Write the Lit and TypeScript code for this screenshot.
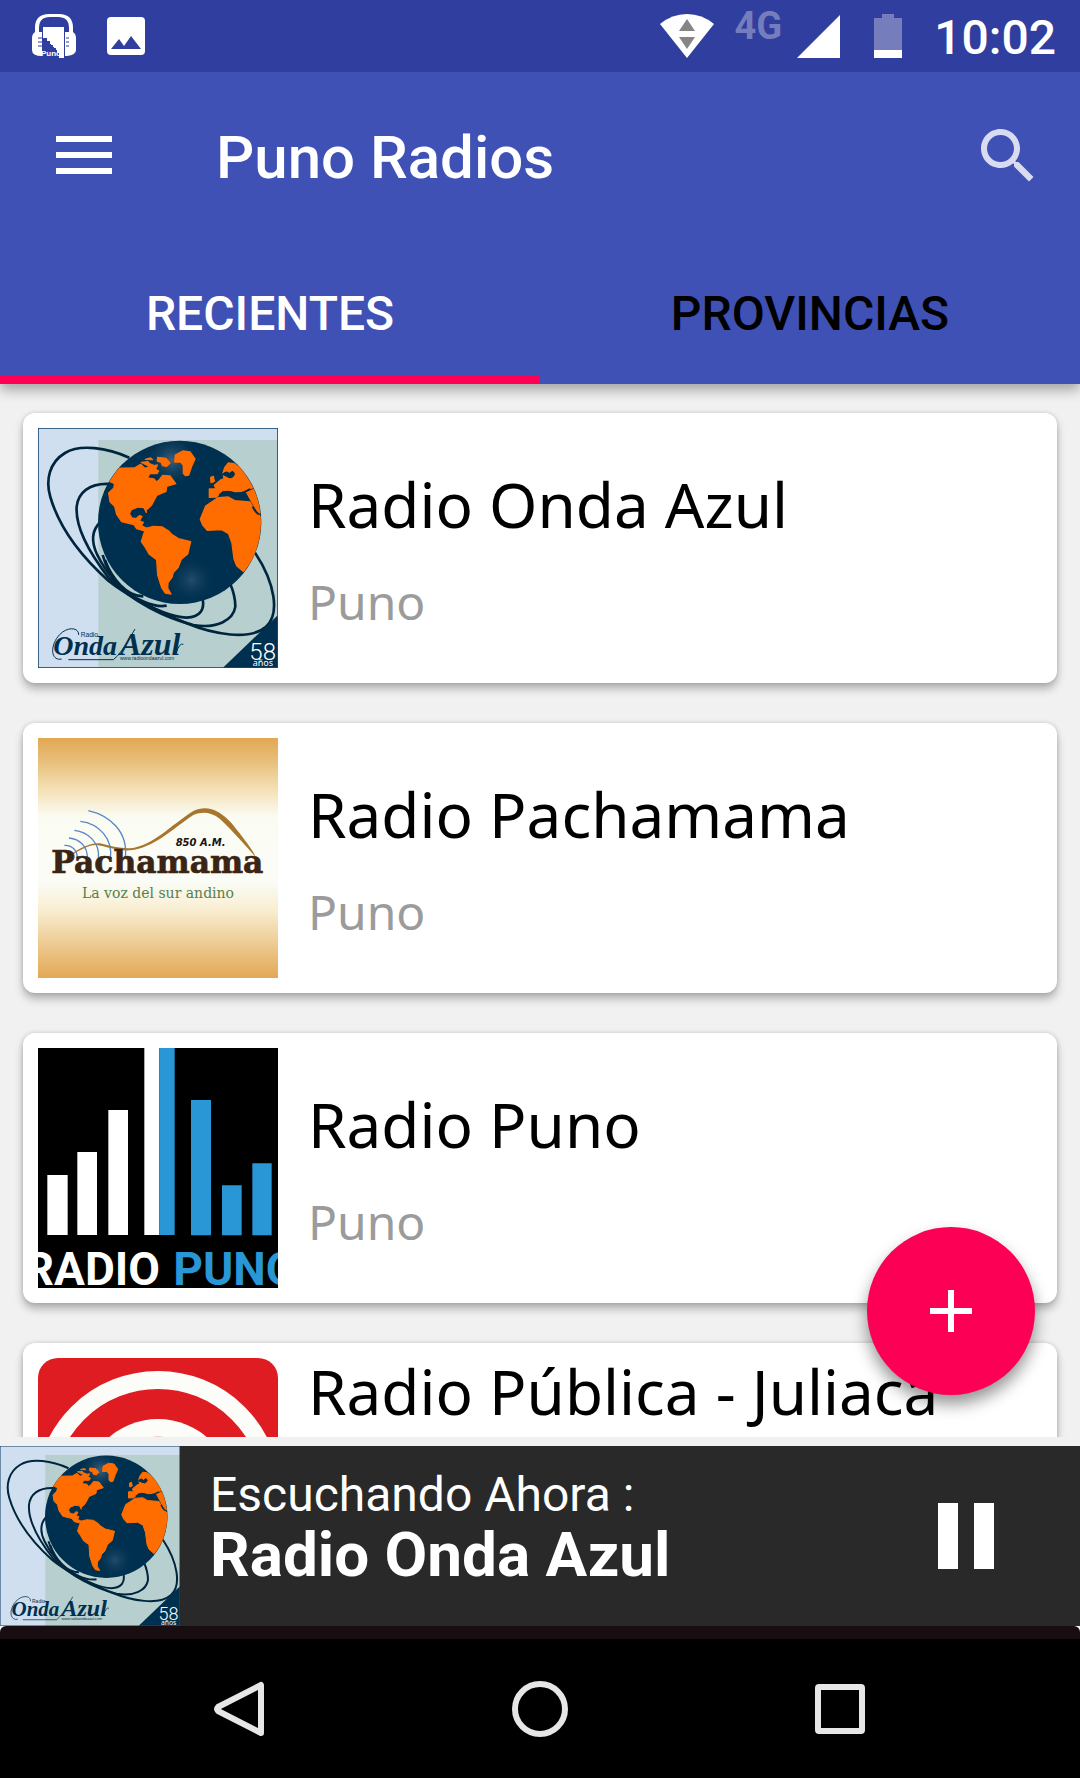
import { LitElement, html, css, svg } from "lit";
import { customElement, property, state } from "lit/decorators.js";

type LogoName = "onda-azul" | "pachamama" | "puno" | "publica";

interface Station {
  name: string;
  city: string;
  logo: LogoName;
  long?: boolean;
}

const STATIONS: Station[] = [
  { name: "Radio Onda Azul", city: "Puno", logo: "onda-azul" },
  { name: "Radio Pachamama", city: "Puno", logo: "pachamama" },
  { name: "Radio Puno", city: "Puno", logo: "puno" },
  { name: "Radio Pública - Juliaca", city: "Puno", logo: "publica", long: true },
];

const TABS = ["RECIENTES", "PROVINCIAS"];

const ondaAzul = () => svg`
  <defs>
    <clipPath id="globe"><circle cx="479" cy="352" r="244"/></clipPath>
    <radialGradient id="shine"><stop offset="0" stop-color="#3d6080"/><stop offset="1" stop-color="#00304f" stop-opacity="0"/></radialGradient>
  </defs>
  <rect x="54" y="69" width="720" height="720" fill="#cfdff0"/>
  <rect x="235" y="105" width="539" height="684" fill="#b8cfd0"/>
  <g fill="none" stroke="#00263e" stroke-width="8">
    <path d="M328 158C262 128 180 116 135 144C88 172 76 225 91 276C120 375 190 460 265 527C335 583 430 625 500 655C580 688 690 708 738 665C780 628 766 535 705 443"/>
    <path d="M272 237C205 233 174 265 170 305C166 365 205 440 265 517C335 590 440 640 520 660C590 672 640 646 646 605C646 580 640 558 630 535"/>
    <path d="M242 350C212 378 214 412 232 450C258 502 290 545 345 580C400 612 450 635 500 638C542 636 554 612 548 582"/>
    <path d="M248 450C262 500 280 525 300 545C340 580 400 610 440 602"/>
    <path d="M255 465C275 520 320 575 370 574"/>
  </g>
  <circle cx="479" cy="352" r="245" fill="#00304f"/>
  <g clip-path="url(#globe)">
    <circle cx="455" cy="165" r="85" fill="url(#shine)"/>
    <circle cx="515" cy="525" r="75" fill="url(#shine)" opacity=".6"/>
  </g>
  <g clip-path="url(#globe)" fill="#ff6d00" stroke="#ff6d00" stroke-width="4" stroke-linejoin="round">
    <path d="M270 190L343 189L362 178L374 190L392 184L416 198L411 206L390 206L381 219L402 222L409 231L418 224L428 211L450 213L467 236L440 244L438 259L410 271L395 300L378 316L379 322L372 308L354 306L334 314L328 326L336 339L348 341L358 332L366 334L358 348L370 352L364 362L380 370L371 377L350 371L342 359L305 350L290 328L284 304L270 290L266 264L281 250L284 236L262 226Z"/>
    <path d="M378 370L400 364L427 366L446 378L455 388L475 401L512 410L503 447L484 463L474 488L460 503L456 517L444 533L443 550L453 567L436 564L425 548L413 510L410 464L388 448L376 427L364 410L370 390Z"/>
    <path d="M466 150L488 138L510 141L525 162L515 184L506 210L496 212L490 205L490 181L482 171L464 171Z"/>
    <path d="M376 163L392 159L398 164Z M413 157L438 160L450 174L440 184L427 182L424 172L412 168Z M364 172L384 170L388 176L403 182L412 180L408 190L392 186Z"/>
    <path d="M568 252L589 252L583 241L602 225L612 222L609 204L614 188L625 174L642 176L668 194L690 222L703 248L690 250L672 259L645 260L625 255L606 257L590 276L568 277Z"/>
    <path d="M572 217L580 214L583 229L573 233Z"/>
    <path d="M595 278L625 276L644 287L690 291L705 318L730 345L730 410L716 405L700 460L671 500L650 482L642 462L636 415L626 386L605 374L562 376L548 360L541 343L557 303L577 290Z"/>
    <path d="M680 262L704 252L728 320L716 325L694 288Z"/>
    <path d="M608 208Q620 195 628 207Q640 192 643 208Q636 223 622 214Z" fill="#00304f" stroke="#00304f"/>
    <path d="M598 270Q620 252 648 268Q675 262 690 252M698 305Q705 320 716 328" fill="none" stroke="#00304f" stroke-width="6"/>
  </g>
  <path d="M608 789L774 630V789Z" fill="#00304f"/>
  <g fill="#00304f">
    <text class="script" x="100" y="750" font-size="84">Onda</text>
    <text class="script" x="300" y="750" font-size="96">Azul</text>
    <text class="sans" x="182" y="695" font-size="20">Radio</text>
    <text class="sans" x="300" y="764" font-size="15">www.radioondaazul.com</text>
  </g>
  <path d="M176 690C178 665 135 662 110 700C88 735 98 768 125 762M145 764H280Q300 752 345 672M468 746Q478 712 490 718" fill="none" stroke="#00304f" stroke-width="3"/>
  <text class="light" x="688" y="765" font-size="72" fill="#fff">58</text>
  <text class="noto" x="698" y="784" font-size="27" fill="#fff">años</text>
  <path d="M55 69V789M773 69V789M54 70H774M54 788H774" stroke="#1d4a70" stroke-width="3"/>`;

const pachamama = () => svg`
  <defs>
    <linearGradient id="dusk" x1="0" y1="0" x2="0" y2="1">
      <stop offset="0" stop-color="#e2a854"/><stop offset=".1" stop-color="#e8bf7c"/>
      <stop offset=".22" stop-color="#f5e2b8"/><stop offset=".33" stop-color="#fafcf4"/>
      <stop offset=".6" stop-color="#fafcf6"/><stop offset=".72" stop-color="#f9edd0"/>
      <stop offset=".88" stop-color="#ebc588"/><stop offset="1" stop-color="#e2a854"/>
    </linearGradient>
  </defs>
  <rect x="54" y="69" width="720" height="720" fill="url(#dusk)"/>
  <path d="M155 416C185 396 215 382 240 385C270 393 300 401 330 400C400 392 450 332 520 288C560 268 600 285 635 325C675 375 698 405 708 428C680 395 640 350 600 312C572 290 545 290 520 300C460 340 400 400 330 406C290 408 250 392 230 390C210 388 185 402 155 420Z" fill="#a8752c"/>
  <g fill="none" stroke="#5a86c4" stroke-width="4">
    <path d="M205 287C270 302 325 350 316 428"/>
    <path d="M181 319C235 325 280 370 271 432"/>
    <path d="M163 346C205 350 240 385 235 428"/>
    <path d="M147 369C180 372 203 395 202 430"/>
    <path d="M133 391C155 390 172 405 172 430"/>
  </g>
  <text class="slab-bold" x="94" y="475" font-size="94" fill="#3a2413" stroke="#3a2413" stroke-width="2">Pachamama</text>
  <text class="slab" x="186" y="549" font-size="42" fill="#55804f">La voz del sur andino</text>
  <text class="oblique" x="467" y="393" font-size="30" fill="#18120e">850 A.M.</text>`;

const puno = () => svg`
  <rect x="54" y="69" width="720" height="720" fill="#000"/>
  <path d="M82 450H143V630H82ZM172 381H231V630H172ZM265 255H324V630H265ZM373 69H418V630H373Z" fill="#fff"/>
  <path d="M418 69H464V630H418ZM513 225H573V631H513ZM606 481H665V631H606ZM697 415H755V631H697Z" fill="#2996d6"/>
  <text class="heavy" x="420" y="781" font-size="138" text-anchor="end" fill="#fff">RADIO</text>
  <text class="heavy" x="460" y="781" font-size="138" fill="#2996d6">PUNO</text>`;

const publica = () => svg`
  <defs><clipPath id="tile"><rect x="54" y="69" width="720" height="720" rx="60"/></clipPath></defs>
  <g clip-path="url(#tile)">
    <rect x="54" y="69" width="720" height="720" fill="#e01c23"/>
    <circle cx="414" cy="476" r="341" fill="none" stroke="#fcfcf8" stroke-width="54"/>
    <circle cx="414" cy="476" r="224" fill="#fcfcf8"/>
    <circle cx="414" cy="476" r="171" fill="#e01c23"/>
  </g>`;

const LOGOS = { "onda-azul": ondaAzul, pachamama, puno, publica };

@customElement("station-logo")
export class StationLogo extends LitElement {
  static styles = css`
    :host { display: block; aspect-ratio: 1; flex: none; }
    svg { display: block; width: 100%; height: 100%; }
    .script { font-family: "Liberation Serif", serif; font-style: italic; font-weight: 700; }
    .sans { font-family: "Liberation Sans", sans-serif; }
    .light { font-family: Roboto, sans-serif; font-weight: 300; }
    .noto { font-family: "Noto Sans", sans-serif; }
    .slab { font-family: "DejaVu Serif", serif; }
    .slab-bold { font-family: "DejaVu Serif", serif; font-weight: 700; }
    .oblique { font-family: "DejaVu Sans", sans-serif; font-weight: 700; font-style: italic; }
    .heavy { font-family: Roboto, sans-serif; font-weight: 700; }
  `;

  @property() name: LogoName = "onda-azul";

  render() {
    return html`<svg viewBox="54 69 720 720" aria-hidden="true">${LOGOS[this.name]()}</svg>`;
  }
}

@customElement("status-bar")
export class StatusBar extends LitElement {
  static styles = css`
    :host {
      display: flex;
      align-items: center;
      justify-content: space-between;
      height: 72px;
      padding: 0 24px 0 32px;
      background: #303f9f;
      color: #fff;
      font: 500 48px/72px Roboto, sans-serif;
    }
    .group { display: flex; align-items: center; height: 72px; }
    .left { gap: 31px; }
    .network {
      align-self: flex-start;
      margin: 0 15px 0 21px;
      padding-top: 4px;
      font-size: 38px;
      font-weight: 700;
      line-height: 44px;
      color: #757dbc;
    }
    .battery { margin: 0 32px 0 34px; }
    time { padding-top: 4px; }
    .tiny { font: 700 8px "Liberation Sans", sans-serif; }
    svg { display: block; }
  `;

  render() {
    return html`
      <div class="group left">
        <svg width="44" height="44" viewBox="0 0 44 44" fill="#fff" aria-hidden="true">
          <path d="M3 18V14Q3 0 17 0H27Q41 0 41 14V18Q44 20 44 24V36Q44 41 35 42H33V18H37V14Q37 3 26 3H18Q7 3 7 14V18H10V42Q0 42 0 36V24Q0 20 3 18Z"/>
          <path d="M11 13H32V44H27V39H24V34H21V31H18V27H15V24H11Z"/>
          <path d="M6 24H10M6 28H10M6 32H10M34 24H37M34 28H37M34 32H37" stroke="#303f9f" stroke-width="1"/>
          <path d="M10 24H13V27H16V30H19V33H22V36H25V42H10Z" fill="#303f9f"/>
          <text class="tiny" x="9" y="42">Puno</text>
        </svg>
        <svg width="38" height="38" viewBox="0 0 38 38" aria-hidden="true">
          <rect width="38" height="38" rx="4" fill="#fff"/>
          <path d="M4 32L12 22L17 29L24 19L34 32Z" fill="#303f9f"/>
        </svg>
      </div>
      <div class="group">
        <svg width="54" height="44" viewBox="0 0 54 44" aria-hidden="true">
          <path d="M0 10Q12 0 27 0T54 10L27 44Z" fill="#fff"/>
          <path d="M27 5L35 17H19ZM27 35L35 23H19Z" fill="#858585"/>
        </svg>
        <span class="network">4G</span>
        <svg width="43" height="44" viewBox="0 0 43 44" aria-hidden="true"><path d="M43 1V44H0Z" fill="#fff"/></svg>
        <svg class="battery" width="28" height="44" viewBox="0 0 28 44" aria-hidden="true">
          <path d="M0 4H8V0H20V4H28V36H0Z" fill="#757dbc"/>
          <path d="M0 36H28V44H0Z" fill="#fff"/>
        </svg>
        <time>10:02</time>
      </div>
    `;
  }
}

@customElement("station-card")
export class StationCard extends LitElement {
  static styles = css`
    :host { display: block; }
    .card {
      display: flex;
      align-items: center;
      gap: 30px;
      height: 240px;
      padding: 15px;
      border-radius: 12px;
      background: #fff;
      box-shadow: 0 6px 9px rgba(0, 0, 0, 0.26), 0 0 5px rgba(0, 0, 0, 0.14);
      color: #000;
      font-family: "Noto Sans", sans-serif;
      text-decoration: none;
    }
    station-logo { width: 240px; }
    .text { display: flex; flex-direction: column; gap: 22px; }
    .name { margin: 0; font-size: 62px; font-weight: 400; line-height: 86px; white-space: nowrap; }
    .long .name { min-height: 172px; }
    .city { margin: 0; font-size: 48px; line-height: 66px; color: #9b9b9b; }
  `;

  @property({ attribute: false }) station!: Station;

  render() {
    const s = this.station;
    return html`
      <a class="card" href="#${s.logo}">
        <station-logo name=${s.logo}></station-logo>
        <div class=${s.long ? "text long" : "text"}>
          <h2 class="name">${s.name}</h2>
          <p class="city">${s.city}</p>
        </div>
      </a>
    `;
  }
}

@customElement("app-root")
export class AppRoot extends LitElement {
  static styles = css`
    :host {
      display: flex;
      flex-direction: column;
      height: 100vh;
      overflow: hidden;
      background: #f1f1f1;
      font-family: Roboto, sans-serif;
    }
    button {
      display: grid;
      place-items: center;
      margin: 0;
      padding: 0;
      border: 0;
      background: none;
      color: inherit;
      font: inherit;
      cursor: pointer;
    }
    svg { display: block; }
    header {
      position: relative;
      z-index: 1;
      flex: none;
      background: #3f51b5;
      color: #fff;
      box-shadow: 0 6px 12px rgba(0, 0, 0, 0.32);
    }
    .toolbar { display: flex; align-items: center; height: 168px; padding: 0 36px 0 48px; }
    .title { flex: 1; margin: 0 0 0 96px; padding-top: 4px; font-size: 60px; font-weight: 500; line-height: 72px; }
    .tabs { display: grid; grid-template-columns: 1fr 1fr; }
    .tab {
      box-sizing: border-box;
      height: 144px;
      padding-top: 11px;
      border-bottom: 9px solid transparent;
      color: #000;
      font-size: 48px;
      font-weight: 500;
    }
    .tab[aria-selected="true"] { color: #fff; border-color: #ff0055; }
    main { position: relative; flex: 1; min-height: 0; display: flex; margin-bottom: 9px; }
    .list {
      flex: 1;
      display: flex;
      flex-direction: column;
      gap: 40px;
      margin: 0;
      padding: 29px 23px;
      overflow-y: auto;
      scrollbar-width: none;
      list-style: none;
    }
    .fab {
      position: absolute;
      right: 45px;
      bottom: 42px;
      width: 168px;
      height: 168px;
      border-radius: 50%;
      background: #fc0055;
      box-shadow: 0 9px 16px rgba(0, 0, 0, 0.42);
    }
    .player { display: flex; align-items: center; flex: none; background: #292929; color: #fff; }
    .player station-logo { width: 180px; }
    .now { flex: 1; padding: 0 0 18px 30px; }
    .label { margin: 0; font-size: 48px; line-height: 56px; }
    .playing { margin: 0; font-size: 62px; font-weight: 700; line-height: 64px; }
    .pause { width: 144px; height: 144px; margin-right: 42px; }
    .bottom { flex: none; background: #fff; }
    nav {
      display: flex;
      justify-content: center;
      gap: 200px;
      height: 139px;
      border-top: 13px solid #180e12;
      border-radius: 6px 6px 0 0;
      background: #000;
    }
    nav button { width: 100px; height: 139px; }
  `;

  @state() private tab = 0;

  render() {
    return html`
      <header>
        <status-bar></status-bar>
        <div class="toolbar">
          <button aria-label="Menú">
            <svg width="72" height="72" viewBox="0 0 72 72"><path d="M8 16H64V22H8ZM8 32H64V38H8ZM8 48H64V54H8Z" fill="#fff"/></svg>
          </button>
          <h1 class="title">Puno Radios</h1>
          <button aria-label="Buscar">
            <svg width="72" height="72" viewBox="0 0 24 24"><path fill="#d9dcf0" d="M15.5 14h-.79l-.28-.27C15.41 12.59 16 11.11 16 9.5 16 5.91 13.09 3 9.5 3S3 5.91 3 9.5 5.91 16 9.5 16c1.61 0 3.09-.59 4.23-1.57l.27.28v.79l5 4.99L20.49 19l-4.99-5zm-6 0C7.01 14 5 11.99 5 9.5S7.01 5 9.5 5 14 7.01 14 9.5 11.99 14 9.5 14z"/></svg>
          </button>
        </div>
        <div class="tabs" role="tablist">
          ${TABS.map(
            (label, i) => html`
              <button class="tab" role="tab" aria-selected=${this.tab === i ? "true" : "false"} @click=${() => (this.tab = i)}>${label}</button>
            `
          )}
        </div>
      </header>
      <main>
        <ul class="list">
          ${STATIONS.map((s) => html`<li><station-card .station=${s}></station-card></li>`)}
        </ul>
        <button class="fab" aria-label="Agregar">
          <svg width="42" height="42" viewBox="0 0 42 42"><path d="M18 0H24V18H42V24H24V42H18V24H0V18H18Z" fill="#fff"/></svg>
        </button>
      </main>
      <section class="player">
        <station-logo name="onda-azul"></station-logo>
        <div class="now">
          <p class="label">Escuchando Ahora :</p>
          <p class="playing">Radio Onda Azul</p>
        </div>
        <button class="pause" aria-label="Pausar">
          <svg width="56" height="66" viewBox="0 0 56 66"><path d="M0 0H20V66H0ZM36 0H56V66H36Z" fill="#fff"/></svg>
        </button>
      </section>
      <div class="bottom">
        <nav>
          <button aria-label="Atrás">
            <svg width="56" height="56" viewBox="0 0 56 56"><path d="M49 4V52L6 30Q4 28 6 26Z" fill="none" stroke="#e6e6e6" stroke-width="6" stroke-linejoin="round"/></svg>
          </button>
          <button aria-label="Inicio">
            <svg width="56" height="56" viewBox="0 0 56 56"><circle cx="28" cy="28" r="25" fill="none" stroke="#e6e6e6" stroke-width="6"/></svg>
          </button>
          <button aria-label="Recientes">
            <svg width="56" height="56" viewBox="0 0 56 56"><rect x="6" y="6" width="44" height="44" rx="1" fill="none" stroke="#e6e6e6" stroke-width="6" stroke-linejoin="round"/></svg>
          </button>
        </nav>
      </div>
    `;
  }
}
